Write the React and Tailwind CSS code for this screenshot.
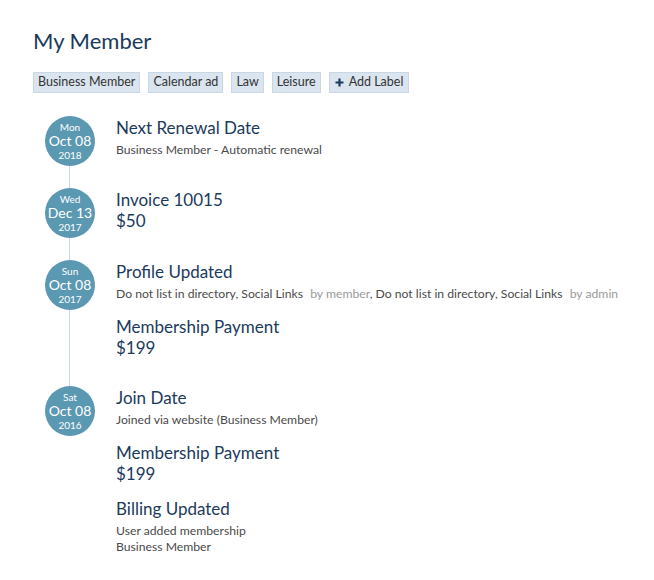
import React from 'react';

const labels = ['Business Member', 'Calendar ad', 'Law', 'Leisure'];

function DateBadge({ day, date, year }) {
  return (
    <div className="w-[50px] h-[50px] rounded-full bg-[#5b98b2] text-white flex flex-col items-center justify-center shrink-0">
      <span className="text-[10px] leading-[14px]">{day}</span>
      <span className="text-[14px] leading-[14px]">{date}</span>
      <span className="text-[10px] leading-[14px]">{year}</span>
    </div>
  );
}

function Title({ children }) {
  return <div className="text-[17px] leading-[21px] text-[#1b3a5c]">{children}</div>;
}

function Sub({ children }) {
  return <div className="text-[12.2px] leading-[16px] text-[#4a4a4a]">{children}</div>;
}

function Group({ badge, last, children }) {
  return (
    <div className="flex">
      <div className="w-[50px] relative shrink-0">
        <DateBadge {...badge} />
        {!last && <div className="absolute left-[24px] top-[50px] bottom-[-22px] w-px bg-[#c5d9e3]" />}
      </div>
      <div className="ml-[21px] pt-px pb-[6px] flex flex-col gap-[14px]">{children}</div>
    </div>
  );
}

export default function App() {
  return (
    <div className="min-h-screen bg-white px-[33px] pt-[28px] font-['Lato','Open_Sans',sans-serif]">
      <h1 className="text-[22px] leading-[26px] text-[#1b3a5c]">My Member</h1>
      <div className="flex gap-[8px] mt-[18px]">
        {labels.map((l) => (
          <span key={l} className="h-[21px] px-[4px] flex items-center bg-[#dbe5f0] border border-[#c9d6e4] text-[12.5px] text-[#333]">
            {l}
          </span>
        ))}
        <span className="h-[21px] px-[5px] flex items-center gap-[5px] bg-[#dbe5f0] border border-[#c9d6e4] text-[12.5px] text-[#333]">
          <svg width="9" height="9" viewBox="0 0 9 9">
            <path d="M4.5 0.5v8M0.5 4.5h8" stroke="#1b3a5c" strokeWidth="2.2" />
          </svg>
          Add Label
        </span>
      </div>

      <div className="mt-[23px] ml-[12px] flex flex-col gap-[22px]">
        <Group badge={{ day: 'Mon', date: 'Oct 08', year: '2018' }}>
          <div>
            <Title>Next Renewal Date</Title>
            <div className="mt-[4px]"><Sub>Business Member - Automatic renewal</Sub></div>
          </div>
        </Group>
        <Group badge={{ day: 'Wed', date: 'Dec 13', year: '2017' }}>
          <div>
            <Title>Invoice 10015</Title>
            <Title>$50</Title>
          </div>
        </Group>
        <Group badge={{ day: 'Sun', date: 'Oct 08', year: '2017' }}>
          <div>
            <Title>Profile Updated</Title>
            <div className="mt-[4px]">
              <Sub>
                Do not list in directory, Social Links <span className="text-[#9a9a9a] ml-[4px]">by member</span>, Do not list in directory, Social Links <span className="text-[#9a9a9a] ml-[4px]">by admin</span>
              </Sub>
            </div>
          </div>
          <div>
            <Title>Membership Payment</Title>
            <Title>$199</Title>
          </div>
        </Group>
        <Group last badge={{ day: 'Sat', date: 'Oct 08', year: '2016' }}>
          <div>
            <Title>Join Date</Title>
            <div className="mt-[4px]"><Sub>Joined via website (Business Member)</Sub></div>
          </div>
          <div>
            <Title>Membership Payment</Title>
            <Title>$199</Title>
          </div>
          <div>
            <Title>Billing Updated</Title>
            <div className="mt-[4px]">
              <Sub>User added membership</Sub>
              <Sub>Business Member</Sub>
            </div>
          </div>
        </Group>
      </div>
    </div>
  );
}
